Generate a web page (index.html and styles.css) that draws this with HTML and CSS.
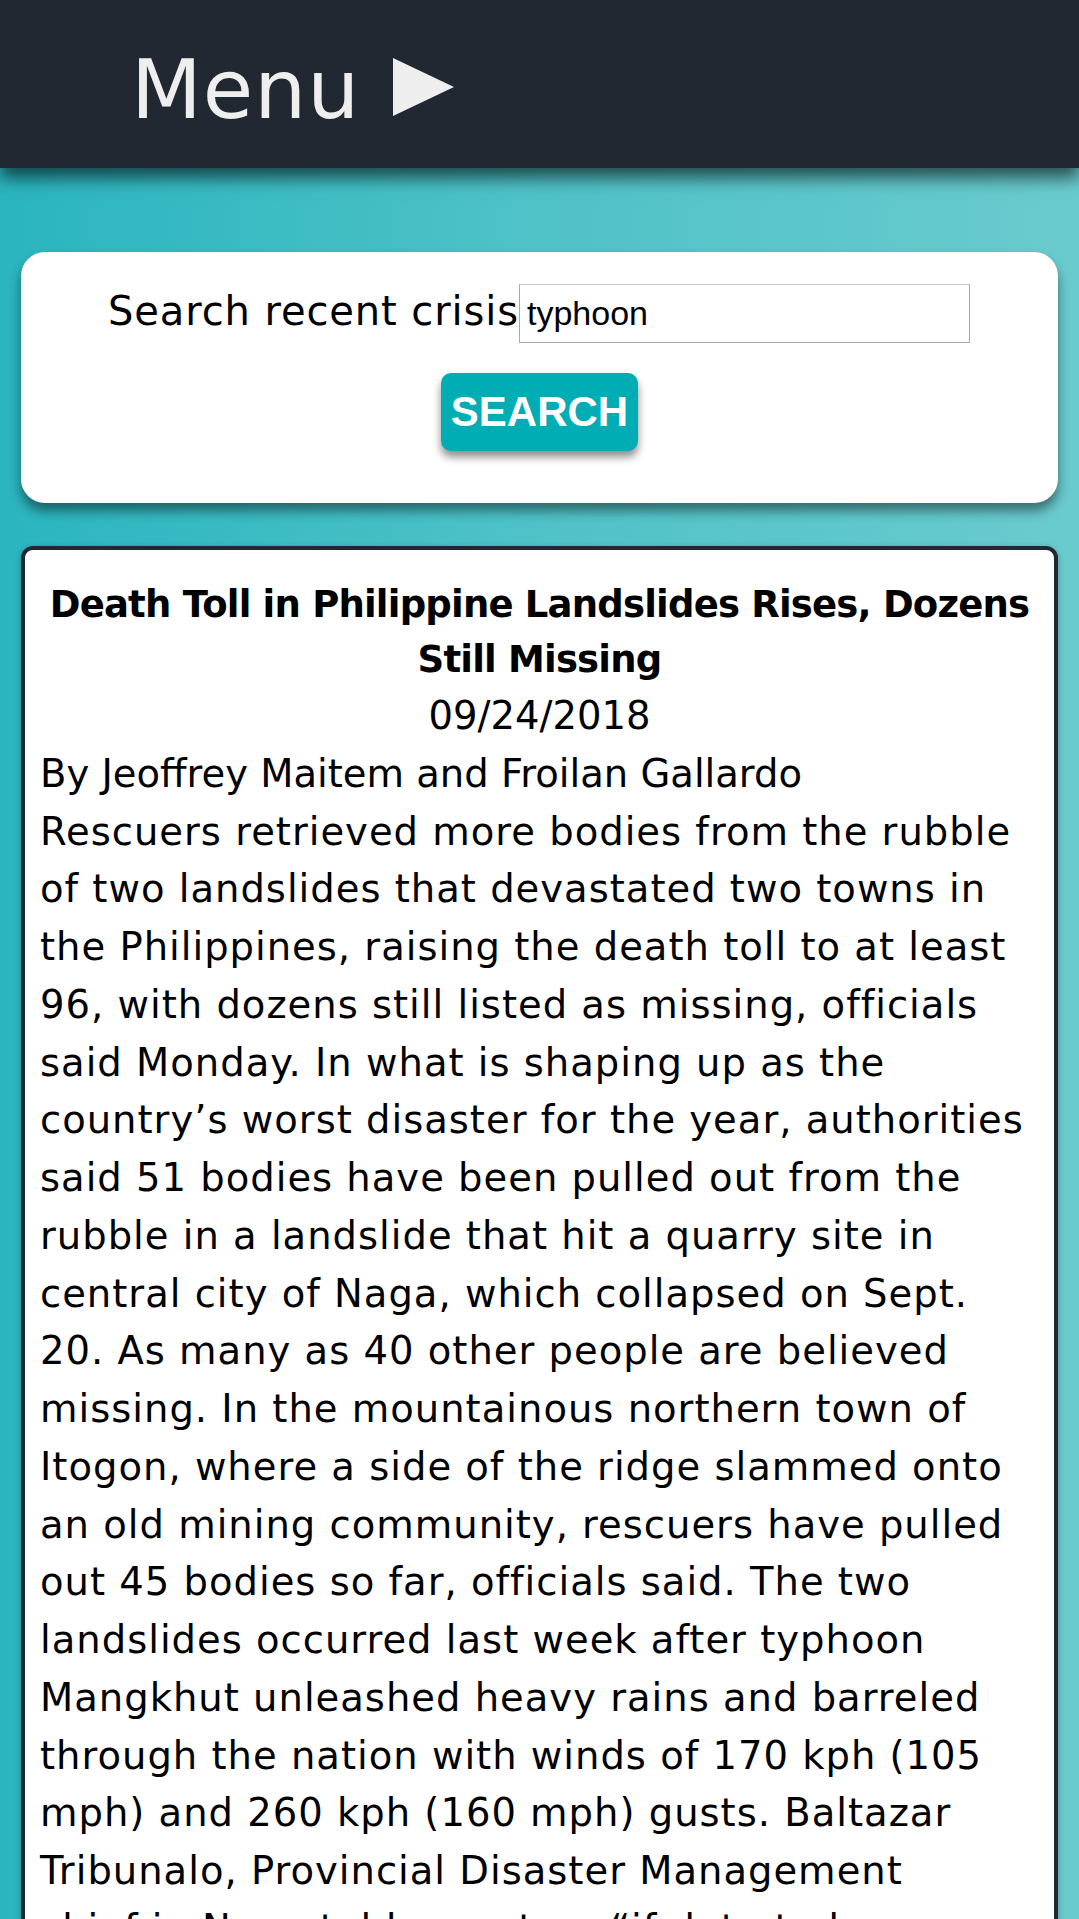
FILE: index.html
```html
<!DOCTYPE html>
<html lang="en">
<head>
<meta charset="utf-8">
<title>Crisis search</title>
<link rel="stylesheet" href="styles.css">
</head>
<body>
<header class="topbar">
  <div class="menu-toggle">
    <span class="menu-label">Menu</span>
    <svg class="menu-arrow" width="61" height="58" viewBox="0 0 61 58" aria-hidden="true"><polygon points="0,0 61,29 0,58" fill="#eeeeee"/></svg>
  </div>
</header>
<main class="content">
  <section class="search-card">
    <form class="search-form">
      <div class="search-row">
        <label class="search-label" for="q">Search recent crisis</label>
        <input class="search-input" id="q" type="text" value="typhoon">
      </div>
      <button class="search-btn" type="button">SEARCH</button>
    </form>
  </section>
  <article class="news-card">
    <h2 class="news-title">Death Toll in Philippine Landslides Rises, Dozens Still Missing</h2>
    <div class="news-date">09/24/2018</div>
    <div class="news-byline">By Jeoffrey Maitem and Froilan Gallardo</div>
    <p class="news-body">Rescuers retrieved more bodies from the rubble<br>
of two landslides that devastated two towns in<br>
the Philippines, raising the death toll to at least<br>
96, with dozens still listed as missing, officials<br>
said Monday. In what is shaping up as the<br>
country’s worst disaster for the year, authorities<br>
said 51 bodies have been pulled out from the<br>
rubble in a landslide that hit a quarry site in<br>
central city of Naga, which collapsed on Sept.<br>
20. As many as 40 other people are believed<br>
missing. In the mountainous northern town of<br>
Itogon, where a side of the ridge slammed onto<br>
an old mining community, rescuers have pulled<br>
out 45 bodies so far, officials said. The two<br>
landslides occurred last week after typhoon<br>
Mangkhut unleashed heavy rains and barreled<br>
through the nation with winds of 170 kph (105<br>
mph) and 260 kph (160 mph) gusts. Baltazar<br>
Tribunalo, Provincial Disaster Management<br>
chief in Naga told reporters “if data to be<br>
believed, there are still many people trapped<br>
under the rubble.”</p>
  </article>
</main>
</body>
</html>
```
FILE: styles.css
```css
html, body {
  margin: 0;
  padding: 0;
}
body {
  min-height: 100vh;
  background: linear-gradient(90deg, #2ab5bf 0%, #4fc2c8 50%, #6acbce 100%);
  font-family: "DejaVu Sans", "Noto Sans", sans-serif;
  color: #000;
  overflow: hidden;
}
.topbar {
  height: 168px;
  background: #222831;
  box-shadow: 0 10px 16px rgba(0, 0, 0, 0.6);
  display: flex;
  align-items: center;
  padding-left: 131px;
  box-sizing: border-box;
  position: relative;
  z-index: 2;
}
.menu-toggle {
  display: flex;
  align-items: center;
  gap: 33px;
  margin-top: 12px;
}
.menu-label {
  font-size: 82px;
  line-height: 1;
  color: #eeeeee;
  letter-spacing: 1px;
}
.menu-arrow {
  display: block;
  margin-top: -6px;
}
.content {
  padding: 84px 21px 0;
}
.search-card {
  background: #fff;
  border-radius: 24px;
  box-shadow: 0 8px 12px rgba(0, 0, 0, 0.45);
  padding: 32px 0 52px;
}
.search-form {
  display: flex;
  flex-direction: column;
  align-items: center;
}
.search-row {
  display: flex;
  align-items: baseline;
  justify-content: center;
  padding-right: 1px;
}
.search-label {
  font-size: 40px;
  letter-spacing: 0.9px;
  color: #000;
}
.search-input {
  box-sizing: border-box;
  width: 451px;
  height: 59px;
  margin: 0;
  border: 1px solid #aaaaaa;
  border-top-color: #c4c4c4;
  padding: 0 7px;
  font-family: "Liberation Sans", Arial, sans-serif;
  font-size: 34px;
  color: #000;
  background: #fff;
  outline: none;
}
.search-btn {
  margin-top: 30px;
  height: 78px;
  padding: 0 10px;
  border: none;
  border-radius: 10px;
  background: #00adb5;
  color: #fff;
  font-family: "Liberation Sans", Arial, sans-serif;
  font-weight: bold;
  font-size: 42px;
  box-shadow: 0 6px 8px rgba(0, 0, 0, 0.45);
}
.news-card {
  margin-top: 43px;
  background: #fff;
  border: 4px solid #222831;
  border-radius: 12px;
  box-shadow: 0 2px 6px rgba(0, 0, 0, 0.3);
  padding: 27px 15px 40px;
  font-size: 38.5px;
  line-height: 57.75px;
  letter-spacing: 1px;
}
.news-title {
  margin: 0;
  text-align: center;
  font-size: 37px;
  line-height: 55px;
  font-weight: bold;
  letter-spacing: -0.8px;
}
.news-date {
  text-align: center;
  letter-spacing: 0;
}
.news-byline {
  margin: 0;
  letter-spacing: 0;
}
.news-body {
  margin: 0;
}
```
